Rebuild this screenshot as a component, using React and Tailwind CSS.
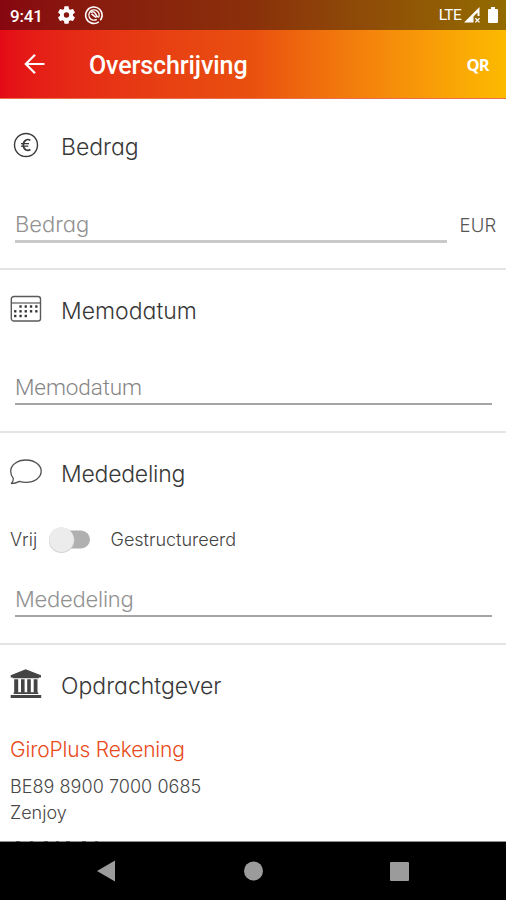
import React from "react";

const muli = "font-[Inter,'Open_Sans',sans-serif] [font-feature-settings:'cv11']";

function Heading({ icon, children, className = "" }) {
  return (
    <div className="flex h-8 items-center pl-[10px]">
      <div className="flex h-8 w-[51px] shrink-0 items-center">{icon}</div>
      <h2 className={`whitespace-nowrap text-[23px] leading-8 font-light text-[#383838] ${className}`}>{children}</h2>
    </div>
  );
}

function Euro() {
  return (
    <svg width="32" height="32" viewBox="0 0 32 32" fill="none" stroke="#3a3a3a" className="-mt-[4px]">
      <circle cx="16" cy="16" r="11.5" strokeWidth="1.4" />
      <path d="M20.4 11.4c-1.4-1-3.3-1.1-4.7-.2-1.8 1.1-2.4 3-2.4 4.8s.7 3.8 2.3 4.8c1.5.8 3.4.7 4.8-.3" strokeWidth="1.7" />
      <path d="M11 14.7h8M11 17.2h7.3" strokeWidth="1.2" />
    </svg>
  );
}

function Calendar() {
  const dots = [
    [10.5, 11.5], [15.7, 11.5], [21, 11.5], [26.3, 11.5],
    [5.2, 16.3], [10.5, 16.3], [15.7, 16.3], [21, 16.3], [26.3, 16.3],
    [5.2, 21], [10.5, 21], [15.7, 21],
  ];
  return (
    <svg width="32" height="28" viewBox="0 0 32 28" fill="none" stroke="#5a5a5a" className="-mt-[4px]">
      <rect x="1.3" y="1.5" width="29.2" height="24.5" rx="2.6" strokeWidth="1.4" />
      <path d="M1.3 8h29.2" strokeWidth="1.2" />
      {dots.map(([x, y]) => (
        <rect key={`${x}-${y}`} x={x - 1.1} y={y - 1.2} width="2.3" height="2.4" fill="#333" stroke="none" />
      ))}
    </svg>
  );
}

function Bubble() {
  return (
    <svg width="32" height="28" viewBox="0 0 32 28" fill="none" stroke="#505050" strokeWidth="1.3" strokeLinejoin="round" className="-mt-[5px]">
      <path d="M1.4 25.6c1.400-2 2.100-4 1.900-5.200C1.600 18.500.7 16 .7 13.300.7 6.800 7.500 2 16 2s15.200 5 15.200 11.300S24.500 24.300 16 24.300c-2.500 0-4.400-.3-6.500-1-2.300 1.200-5 2.200-8.100 2.300z" />
    </svg>
  );
}

function Bank() {
  return (
    <svg width="32" height="30" viewBox="0 0 32 30" fill="#444" className="-mt-[4px]">
      <path d="M15.700.3 31 6.300v2.100h-2.100v.8H2.700v-.8H.7V6.300z" />
      <path d="M4.200 10.300h4v13.400h-4zM11 10.300h3.600v13.400H11zM17.200 10.300h3.600v13.400h-3.600zM23.700 10.300h3.800v13.400h-3.800z" />
      <path d="M3.700 23.200h24.500v1.800H3.700zM.7 26h30.500v3H.7z" />
    </svg>
  );
}

export default function App() {
  return (
    <div className={`flex h-[900px] w-[506px] flex-col overflow-hidden bg-white ${muli}`}>
      <div className="flex h-[30px] shrink-0 items-center bg-linear-to-r from-[#870610] via-[#8a300a] to-[#926b00] pr-[8px] pl-[10px] font-[Roboto,sans-serif] text-white">
        <span className="w-[48px] pt-px text-[17px] leading-[30px] font-medium tracking-[-0.2px]">9:41</span>
        <svg width="17" height="18" viewBox="3 2 18 20" fill="white">
          <path d="M19.140 12.940c.04-.3.06-.61.06-.94s-.02-.64-.07-.94l2.030-1.580c.18-.14.23-.41.12-.61l-1.920-3.320c-.12-.22-.37-.29-.59-.22l-2.390.96c-.5-.38-1.030-.7-1.620-.94l-.36-2.540c-.04-.24-.24-.41-.48-.41h-3.840c-.24 0-.43.17-.47.41l-.36 2.540c-.59.24-1.130.57-1.620.94l-2.390-.96c-.22-.08-.47 0-.59.22L2.740 8.870c-.12.21-.08.47.12.61l2.030 1.580c-.05.3-.09.63-.09.94s.02.64.07.94l-2.030 1.580c-.18.14-.23.41-.12.61l1.920 3.320c.12.22.37.29.59.22l2.390-.96c.5.38 1.030.7 1.620.94l.36 2.540c.05.24.24.41.48.41h3.840c.24 0 .44-.17.47-.41l.36-2.540c.59-.24 1.130-.56 1.620-.94l2.390.96c.22.08.47 0 .59-.22l1.920-3.320c.12-.22.07-.47-.12-.61zM12 15a3 3 0 1 1 0-6 3 3 0 0 1 0 6z" />
        </svg>
        <svg width="20" height="20" viewBox="0 0 20 20" fill="none" stroke="white" className="ml-[9px]">
          <path d="M14.800 16.800A8.200 8.200 0 1 1 18 11.500c-.3 1.600-.9 2.800-1.700 3.800" strokeWidth="1.600" />
          <path d="M12.800 14.400A5.200 5.200 0 1 1 15 8.500c.4 1.500.2 3-.6 4.200" strokeWidth="1.300" />
          <path d="M6.500 7.500c1.800-1.100 3.800-.6 4.800.9l2.200 4M7.500 8.800l4.500 3.700" strokeWidth="1.600" />
        </svg>
        <span className="ml-auto text-[15.500px] leading-[30px] tracking-[-0.700px]">LTE</span>
        <svg width="17" height="17" viewBox="0 0 17 17" className="ml-[3px]">
          <path d="M0 15.500 15.500 0v9H13.500V5.500L9.500 9.500v6z" fill="white" />
          <path d="m11.300 11.200 4.200 4.200m0-4.200-4.200 4.200" stroke="white" strokeWidth="1.300" />
        </svg>
        <svg width="10" height="17" viewBox="0 0 10 17" fill="white" className="ml-[7px]">
          <path d="M3 0h4v2h2a1 1 0 0 1 1 1v12a1 1 0 0 1-1 1H1a1 1 0 0 1-1-1V3a1 1 0 0 1 1-1h2z" />
        </svg>
      </div>

      <header className="flex h-[69px] shrink-0 items-center border-b border-[#e8714a] bg-linear-to-r from-[#e40a17] via-[#e9500f] to-[#fcba00] pr-[17px] pl-[24px] font-[Roboto,sans-serif] text-white">
        <svg width="21" height="22" viewBox="0 0 21 22" fill="none" stroke="white" strokeWidth="2.200">
          <path d="M20.500 11H2M11 1.800 1.800 11 11 20.200" />
        </svg>
        <h1 className="ml-[44px] pt-[4px] text-[25px] leading-8 font-medium tracking-[-0.100px]">Overschrijving</h1>
        <span className="ml-auto pt-[3px] font-['Open_Sans',sans-serif] text-[16.500px] font-bold tracking-[-0.700px]">QR</span>
      </header>

      <main className="flex min-h-0 flex-1 flex-col overflow-hidden">
        <section className="h-[171px] shrink-0 border-b-2 border-[#e4e4e4] pt-[32px]">
          <Heading icon={<Euro />}>Bedrag</Heading>
          <div className="mt-[37px] flex h-[43px] pl-[15px]">
            <div className="h-[43px] w-[432px] border-b-[3px] border-[#cacaca] text-[22px] leading-[49px] font-light text-[#929292]">Bedrag</div>
            <span className="ml-[12.500px] text-[18.500px] leading-[50px] font-light tracking-[0.150px] text-[#555]">EUR</span>
          </div>
        </section>

        <section className="h-[163px] shrink-0 border-b-2 border-[#e4e4e4] pt-[25px]">
          <Heading icon={<Calendar />}>Memodatum</Heading>
          <div className="mr-[14px] ml-[15px] mt-[41px] h-[37px] border-b-2 border-[#a5a5a5] font-[Roboto,sans-serif] text-[22.500px] leading-[38px] font-light tracking-[-0.100px] text-[#858585]">Memodatum</div>
        </section>

        <section className="h-[212px] shrink-0 border-b-2 border-[#e4e4e4] pt-[25px]">
          <Heading icon={<Bubble />} className="tracking-[-0.250px]">Mededeling</Heading>
          <div className="mt-[34px] flex h-[32px] items-center pl-[10px] text-[18px] leading-[32px] font-light text-[#444]">
            <span className="w-[39px]">Vrij</span>
            <svg width="44" height="32" viewBox="0 0 44 32" className="-mt-[3px]">
              <rect x="8" y="7.500" width="33" height="18" rx="9" fill="#b0b0b0" />
              <circle cx="12.500" cy="17.300" r="12.800" fill="#d4d4d4" />
              <circle cx="12.500" cy="16.600" r="12.300" fill="#ececec" />
            </svg>
            <span className="ml-[17.500px]">Gestructureerd</span>
          </div>
          <div className="mr-[14px] ml-[15px] mt-[22px] h-[39px] border-b-2 border-[#a5a5a5] text-[22px] leading-[42px] font-light tracking-[-0.250px] text-[#929292]">Mededeling</div>
        </section>

        <section className="shrink-0 pt-[25px]">
          <Heading icon={<Bank />}>Opdrachtgever</Heading>
          <div className="mt-[33px] pl-[10px] font-light whitespace-nowrap text-[#484848]">
            <p className="h-[30px] text-[21px] leading-[30px] tracking-[-0.170px] text-[#e84a20]">GiroPlus Rekening</p>
            <p className="mt-[9px] h-[26px] text-[18px] leading-[26px] tracking-[0.050px]">BE89 8900 7000 0685</p>
            <p className="h-[26px] text-[18px] leading-[26px]">Zenjoy</p>
          </div>
        </section>
      </main>

      <nav className="h-[59px] shrink-0 bg-black">
        <svg width="506" height="59" viewBox="0 0 506 59" fill="#9b9b9b">
          <rect width="506" height="1" fill="#909090" />
          <path d="M16 0h4v1h-4zM30 0h3v1h-3zM44 0h4v1h-4zM56 0h3v1h-3zM66 0h4v1h-4zM82 0h4v1h-4zM95 0h3v1h-3z" fill="#505050" />
          <path d="M97 30 115 19.500v21z" />
          <circle cx="253.500" cy="30" r="9.500" />
          <rect x="390" y="21" width="19" height="19" rx="1" />
        </svg>
      </nav>
    </div>
  );
}
